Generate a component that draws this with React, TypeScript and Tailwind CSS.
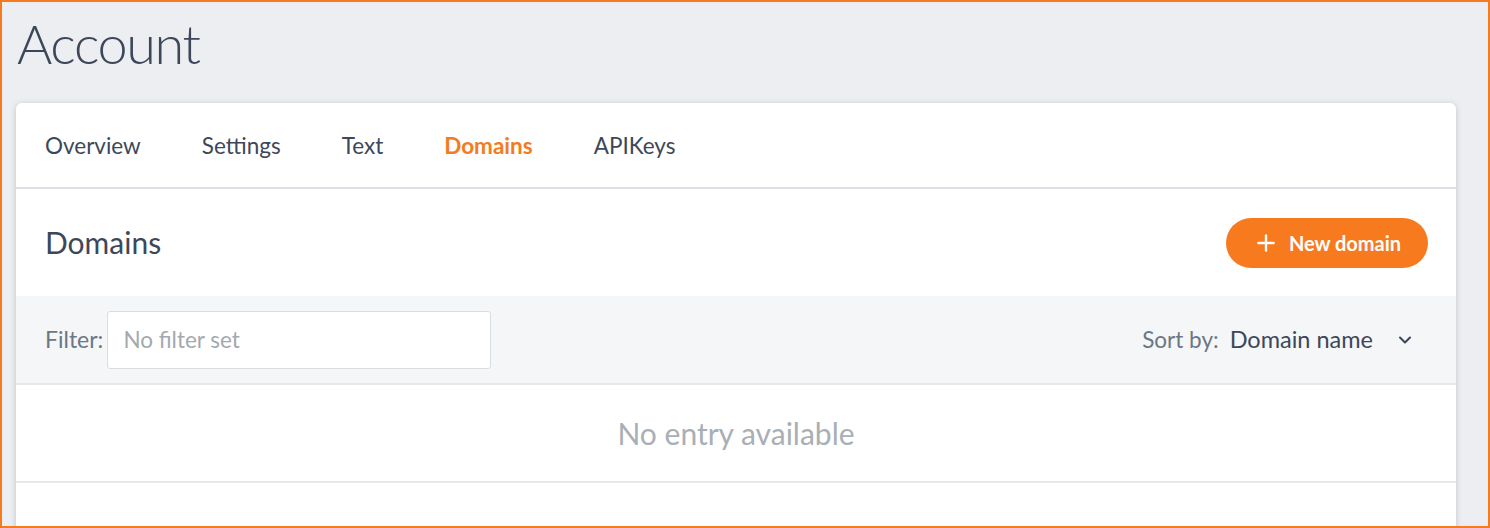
import { Plus, ChevronDown } from "lucide-react";

const tabs = ["Overview", "Settings", "Text", "Domains", "APIKeys"];

const App = () => {
  return (
    <main
      className="h-[528px] w-full overflow-hidden border-2 border-[#f47b20] bg-[#eceef1] text-[#3c4859]"
      style={{ fontFamily: '"Lato", "Open Sans", sans-serif' }}
    >
      <div className="pl-[14px] pr-[32px]">
        <h1 className="h-[101px] pt-[11px] pl-[1px] text-[54px] font-light leading-[62px] tracking-tight text-[#3c4859]">
          Account
        </h1>

        <section className="rounded-md bg-white shadow-[0_1px_6px_rgba(0,0,0,0.18)]">
          <nav className="flex h-[86px] items-center gap-[61px] border-b-2 border-[#dde0e4] px-[29px] pt-[2px] text-[22.5px]">
            {tabs.map((tab) => (
              <span
                key={tab}
                className={
                  tab === "Domains" ? "font-bold text-[#f47b20]" : "text-[#3c4859]"
                }
              >
                {tab}
              </span>
            ))}
          </nav>

          <header className="flex h-[107px] items-center justify-between pl-[29px] pr-[28px]">
            <h2 className="text-[30px] text-[#3c4859]">Domains</h2>
            <button className="flex h-[50px] w-[202px] items-center justify-center gap-[10px] rounded-full bg-[#f77b1e] text-[20px] font-bold text-white">
              <Plus size={26} strokeWidth={2.2} />
              New domain
            </button>
          </header>

          <div className="flex h-[89px] items-center justify-between border-b-2 border-[#e6e8eb] bg-[#f5f6f8] px-[29px] text-[23px]">
            <label className="flex items-center gap-[4px]">
              <span className="text-[#6b7785]">Filter:</span>
              <input
                className="h-[58px] w-[384px] rounded-[3px] border border-[#d9dde1] bg-white px-[15px] text-[22.5px] outline-none placeholder:text-[#a3a9b0]"
                placeholder="No filter set"
              />
            </label>
            <div className="flex items-center pr-[12px]">
              <span className="text-[22.5px] text-[#6b7785]">Sort by:</span>
              <span className="ml-[11px] text-[23.5px] text-[#3c4859]">Domain name</span>
              <ChevronDown size={20} strokeWidth={2.5} className="ml-[22px] text-[#3c4859]" />
            </div>
          </div>

          <div className="flex h-[98px] items-center justify-center border-b-2 border-[#e6e8eb] text-[30px] text-[#a9afb6]">
            No entry available
          </div>

          <div className="h-[60px]" />
        </section>
      </div>
    </main>
  );
};

export default App;
